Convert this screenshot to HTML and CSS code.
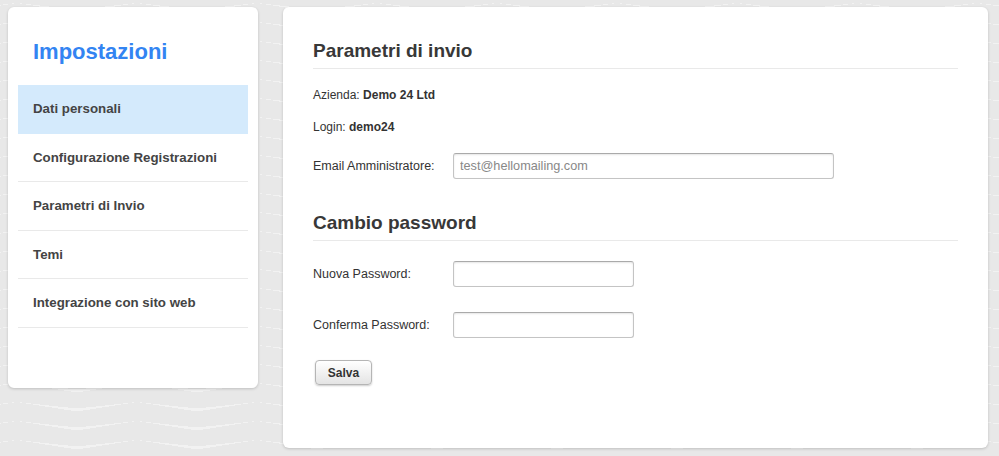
FILE: index.html
```html
<!DOCTYPE html>
<html lang="it">
<head>
  <meta charset="UTF-8">
  <meta name="viewport" content="width=device-width, initial-scale=1.0">
  <title>Impostazioni</title>
  <link rel="stylesheet" href="styles.css">
</head>
<body>
  <div class="sidebar">
    <h1 class="sidebar-title">Impostazioni</h1>
    <ul class="menu">
      <li class="menu-item active">Dati personali</li>
      <li class="menu-item">Configurazione Registrazioni</li>
      <li class="menu-item">Parametri di Invio</li>
      <li class="menu-item">Temi</li>
      <li class="menu-item">Integrazione con sito web</li>
    </ul>
  </div>

  <div class="content">
    <h2 class="section-title">Parametri di invio</h2>
    <div class="info first">Azienda: <b>Demo 24 Ltd</b></div>
    <div class="info">Login: <b>demo24</b></div>
    <div class="field">
      <label class="label">Email Amministratore:</label>
      <input class="input wide" type="text" placeholder="test@hellomailing.com">
    </div>

    <h2 class="section-title second">Cambio password</h2>
    <div class="field pwd-first">
      <label class="label">Nuova Password:</label>
      <input class="input" type="password">
    </div>
    <div class="field pwd-second">
      <label class="label">Conferma Password:</label>
      <input class="input" type="password">
    </div>
    <button class="button">Salva</button>
  </div>
</body>
</html>
```

FILE: styles.css
```css
html, body {
  height: 100%;
}
body {
  margin: 0;
  padding: 7px 11px 8px 8px;
  box-sizing: border-box;
  display: flex;
  align-items: flex-start;
  gap: 25px;
  font-family: "Liberation Sans", Arial, sans-serif;
  color: #333;
  background-color: #e8e8e8;
  background-image: conic-gradient(from 0deg at 60px 3px,
    transparent 0 96.2deg, #f2f2f2 96.2deg 99deg,
    transparent 99deg 261deg, #f2f2f2 261deg 263.8deg,
    transparent 263.8deg);
  background-size: 120px 19px;
  background-position: -43px 0;
}
.sidebar, .content {
  background: white;
  border-radius: 6px;
  box-shadow: 0 1px 3px rgba(0,0,0,0.18);
  box-sizing: border-box;
}
.sidebar {
  width: 250px;
  padding: 32px 10px 60px;
}
.sidebar-title {
  margin: 0 0 20px;
  padding-left: 15px;
  font-size: 22px;
  line-height: 26px;
  color: #3384f2;
}
.menu {
  list-style: none;
  margin: 0;
  padding: 0;
}
.menu-item {
  padding-left: 15px;
  line-height: 47.5px;
  font-size: 13.3px;
  font-weight: bold;
  color: #444;
  border-bottom: 1px solid #e9e9e9;
}
.menu-item.active {
  background-color: #d4eafc;
  border-bottom-color: #d4eafc;
}
.content {
  flex: 1;
  height: 441px;
  padding: 32px 30px 0;
  font-size: 12px;
}
.section-title {
  margin: 0;
  padding-bottom: 5px;
  font-size: 19px;
  line-height: 24px;
  color: #383838;
  border-bottom: 1px solid #e9e9e9;
}
.section-title.second {
  margin-top: 32px;
}
.info {
  line-height: 32px;
}
.info.first {
  margin-top: 10px;
}
.field {
  display: flex;
  align-items: center;
  margin-top: 10px;
  font-size: 12.5px;
}
.field.pwd-first {
  margin-top: 20px;
}
.field.pwd-second {
  margin-top: 25px;
}
.label {
  width: 140px;
}
.input {
  width: 181px;
  height: 26px;
  box-sizing: border-box;
  padding: 0 6px;
  border: 1px solid #c4c4c4;
  border-top-color: #aaa;
  border-radius: 3px;
  box-shadow: inset 0 1px 2px rgba(0,0,0,0.1);
  font-family: "Liberation Sans", Arial, sans-serif;
  font-size: 12.7px;
  color: #333;
}
.input.wide {
  width: 381px;
}
.input::placeholder {
  color: #888;
}
.button {
  margin: 22px 0 0 2px;
  width: 57px;
  height: 25px;
  border: 1px solid #b5b5b5;
  border-radius: 4px;
  background: linear-gradient(#ffffff, #e4e4e4);
  box-shadow: 0 1px 2px rgba(0,0,0,0.2);
  font-family: "Liberation Sans", Arial, sans-serif;
  font-size: 12px;
  font-weight: bold;
  color: #333;
  cursor: pointer;
}
```
